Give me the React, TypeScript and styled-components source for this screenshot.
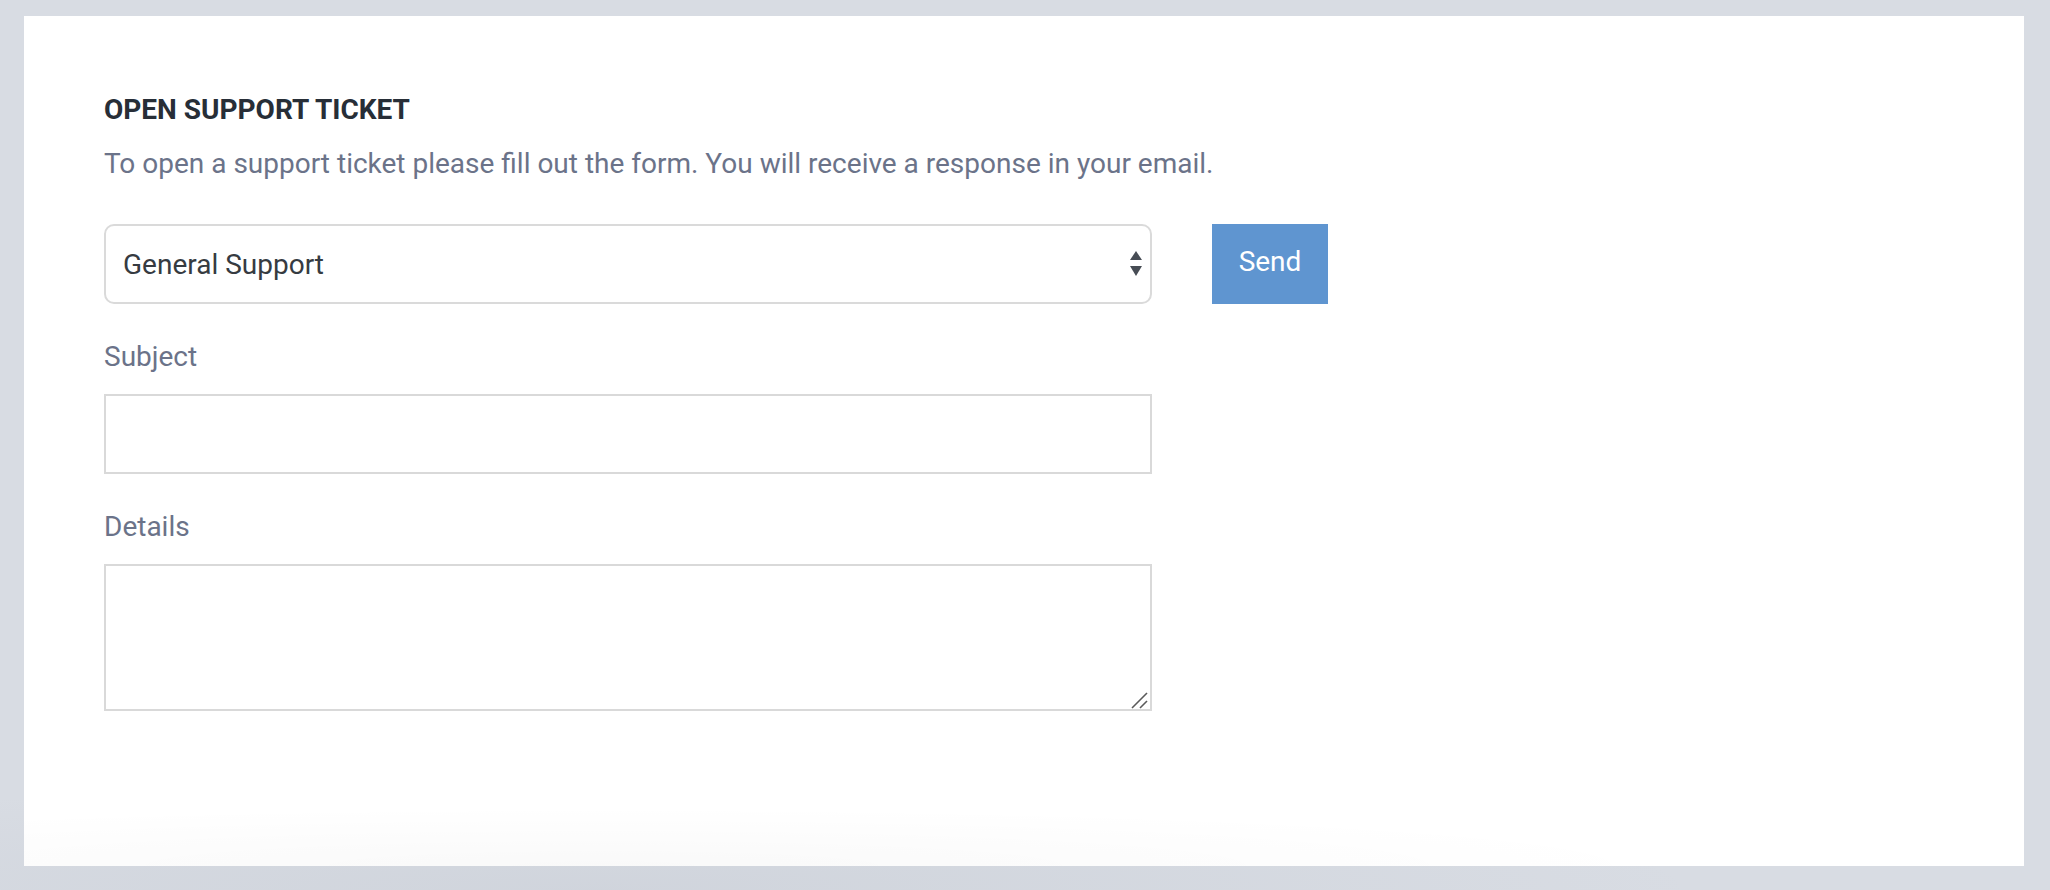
import React from "react";
import styled, { createGlobalStyle } from "styled-components";

const GlobalStyle = createGlobalStyle`
  html, body {
    margin: 0;
    padding: 0;
    background: #d8dce3;
  }
  body {
    font-family: Roboto, "Liberation Sans", Arial, sans-serif;
    -webkit-font-smoothing: antialiased;
  }
  * { box-sizing: border-box; }
`;

const Page = styled.div`
  height: 890px;
  padding: 16px 26px 24px 24px;
  background:
    radial-gradient(ellipse 1100px 110px at 600px 890px, rgba(150, 158, 172, 0.12), rgba(150, 158, 172, 0) 100%),
    #d8dce3;
`;

const Panel = styled.section`
  height: 850px;
  background:
    radial-gradient(ellipse 1100px 60px at 580px 850px, rgba(0, 0, 0, 0.025), rgba(0, 0, 0, 0) 100%),
    #ffffff;
  padding: 74px 80px 0 80px;
`;

const Title = styled.h2`
  margin: 0;
  font-size: 28px;
  line-height: 40px;
  font-weight: 700;
  color: #272e37;
  text-transform: uppercase;
`;

const Intro = styled.p`
  margin: 14px 0 0;
  font-size: 28px;
  line-height: 40px;
  font-weight: 400;
  color: #6b7389;
`;

const FormRow = styled.form`
  margin-top: 40px;
  display: flex;
  align-items: flex-start;
  gap: 60px;
`;

const FormColumn = styled.div`
  width: 1048px;
  display: flex;
  flex-direction: column;
`;

const SelectWrap = styled.div`
  position: relative;
  height: 80px;
`;

const Select = styled.select`
  appearance: none;
  -webkit-appearance: none;
  width: 100%;
  height: 80px;
  margin: 0;
  border: 2px solid #dadada;
  border-radius: 10px;
  background: #ffffff;
  padding: 0 48px 0 17px;
  font-family: Roboto, "Liberation Sans", Arial, sans-serif;
  font-size: 28px;
  color: #363b41;
  outline: none;
`;

const Arrows = styled.svg`
  position: absolute;
  right: 10px;
  top: 27px;
  width: 12px;
  height: 26px;
  pointer-events: none;
`;

const FieldGroup = styled.div`
  margin-top: 33px;
  display: flex;
  flex-direction: column;
`;

const Label = styled.label`
  display: block;
  font-size: 28px;
  line-height: 40px;
  color: #6b7389;
  margin-bottom: 17px;
`;

const TextInput = styled.input`
  width: 100%;
  height: 80px;
  margin: 0;
  border: 2px solid #d9d9d9;
  border-radius: 0;
  padding: 0 17px;
  font-family: Roboto, "Liberation Sans", Arial, sans-serif;
  font-size: 28px;
  color: #363b41;
  outline: none;
`;

const AreaWrap = styled.div`
  position: relative;
  height: 147px;
`;

const TextArea = styled.textarea`
  display: block;
  width: 100%;
  height: 147px;
  margin: 0;
  border: 2px solid #d9d9d9;
  border-radius: 0;
  padding: 12px 17px;
  font-family: Roboto, "Liberation Sans", Arial, sans-serif;
  font-size: 28px;
  color: #363b41;
  resize: none;
  outline: none;
`;

const Grip = styled.svg`
  position: absolute;
  right: 3px;
  bottom: 2px;
  width: 18px;
  height: 18px;
  pointer-events: none;
`;

const SendButton = styled.button`
  width: 116px;
  height: 80px;
  flex: none;
  border: none;
  border-radius: 0;
  background: #5f95d0;
  color: #ffffff;
  font-family: Roboto, "Liberation Sans", Arial, sans-serif;
  font-size: 28px;
  font-weight: 400;
  cursor: pointer;
  padding: 0 0 6px;
`;

export default function App() {
  return (
    <>
      <GlobalStyle />
      <Page>
        <Panel>
          <Title>Open Support Ticket</Title>
          <Intro>
            To open a support ticket please fill out the form. You will receive a response in your email.
          </Intro>
          <FormRow onSubmit={(e) => e.preventDefault()}>
            <FormColumn>
              <SelectWrap>
                <Select defaultValue="general">
                  <option value="general">General Support</option>
                  <option value="billing">Billing</option>
                  <option value="technical">Technical</option>
                </Select>
                <Arrows viewBox="0 0 12 26">
                  <polygon points="6,0 12,9 0,9" fill="#474d55" />
                  <polygon points="0,15 12,15 6,25" fill="#474d55" />
                </Arrows>
              </SelectWrap>
              <FieldGroup>
                <Label htmlFor="subject">Subject</Label>
                <TextInput id="subject" type="text" />
              </FieldGroup>
              <FieldGroup>
                <Label htmlFor="details">Details</Label>
                <AreaWrap>
                  <TextArea id="details" />
                  <Grip viewBox="0 0 18 18">
                    <line x1="1" y1="17" x2="16" y2="2" stroke="#5a5a5a" strokeWidth="1.6" />
                    <line x1="9" y1="17" x2="16" y2="10" stroke="#5a5a5a" strokeWidth="1.6" />
                  </Grip>
                </AreaWrap>
              </FieldGroup>
            </FormColumn>
            <SendButton type="submit">Send</SendButton>
          </FormRow>
        </Panel>
      </Page>
    </>
  );
}
